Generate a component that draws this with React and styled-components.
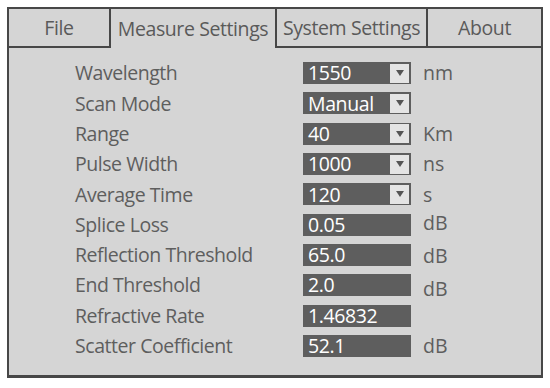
import React from "react";
import styled, { createGlobalStyle } from "styled-components";

const GlobalStyle = createGlobalStyle`
  html, body {
    margin: 0;
    padding: 0;
    background: #ffffff;
  }
  body {
    font-family: "Open Sans", "Noto Sans", "Liberation Sans", sans-serif;
  }
`;

const Frame = styled.div`
  box-sizing: border-box;
  margin: 7px 0 0 7px;
  width: 536px;
  height: 371px;
  border: 2px solid #474747;
  border-bottom-width: 3px;
  background: #d5d5d5;
  display: flex;
  flex-direction: column;
`;

const TabBar = styled.div`
  display: grid;
  grid-template-columns: 102px 166px 151px 1fr;
  height: 39px;
`;

const Tab = styled.div`
  box-sizing: border-box;
  display: flex;
  align-items: center;
  justify-content: center;
  font-size: 19.5px;
  color: #5a5a5a;
  letter-spacing: -0.4px;
  border-right: ${(p) => (p.$last ? "none" : "2px solid #474747")};
  border-bottom: ${(p) => (p.$active ? "none" : "2px solid #474747")};
`;

const Form = styled.div`
  padding: 10px 0 0 66px;
  display: flex;
  flex-direction: column;
`;

const Row = styled.div`
  display: grid;
  grid-template-columns: 228px 108px 1fr;
  align-items: center;
  height: 30.3px;
`;

const Label = styled.div`
  font-size: 19.5px;
  color: #5e5e5e;
  letter-spacing: -0.45px;
  line-height: 1;
`;

const Field = styled.div`
  box-sizing: border-box;
  height: 22px;
  background: #5e5e5e;
  display: flex;
  align-items: center;
  justify-content: space-between;
  padding: 0 2px 0 5px;
  color: #ffffff;
  font-size: 19.5px;
  letter-spacing: -0.4px;
  line-height: 1;
`;

const Arrow = styled.div`
  width: 19px;
  height: 19px;
  background: #e4e4e4;
  display: flex;
  align-items: center;
  justify-content: center;
  &::after {
    content: "";
    border-left: 4px solid transparent;
    border-right: 4px solid transparent;
    border-top: 6px solid #555;
  }
`;

const Unit = styled.div`
  padding-left: 12px;
  font-size: 19.5px;
  color: #5e5e5e;
  line-height: 1;
  transform: translateY(${(p) => p.$shift || 0}px);
`;

const rows = [
  { label: "Wavelength", value: "1550", select: true, unit: "nm" },
  { label: "Scan Mode", value: "Manual", select: true, unit: "" },
  { label: "Range", value: "40", select: true, unit: "Km" },
  { label: "Pulse Width", value: "1000", select: true, unit: "ns" },
  { label: "Average Time", value: "120", select: true, unit: "s" },
  { label: "Splice Loss", value: "0.05", unit: "dB", shift: -2 },
  { label: "Reflection Threshold", value: "65.0", unit: "dB", shift: 1 },
  { label: "End Threshold", value: "2.0", unit: "dB", shift: 4 },
  { label: "Refractive Rate", value: "1.46832", unit: "" },
  { label: "Scatter Coefficient", value: "52.1", unit: "dB" },
];

export default function App() {
  return (
    <>
      <GlobalStyle />
      <Frame>
        <TabBar>
          <Tab>File</Tab>
          <Tab $active>Measure Settings</Tab>
          <Tab>System Settings</Tab>
          <Tab $last>About</Tab>
        </TabBar>
        <Form>
          {rows.map((r) => (
            <Row key={r.label}>
              <Label>{r.label}</Label>
              <Field>
                <span>{r.value}</span>
                {r.select && <Arrow />}
              </Field>
              <Unit $shift={r.shift}>{r.unit}</Unit>
            </Row>
          ))}
        </Form>
      </Frame>
    </>
  );
}
